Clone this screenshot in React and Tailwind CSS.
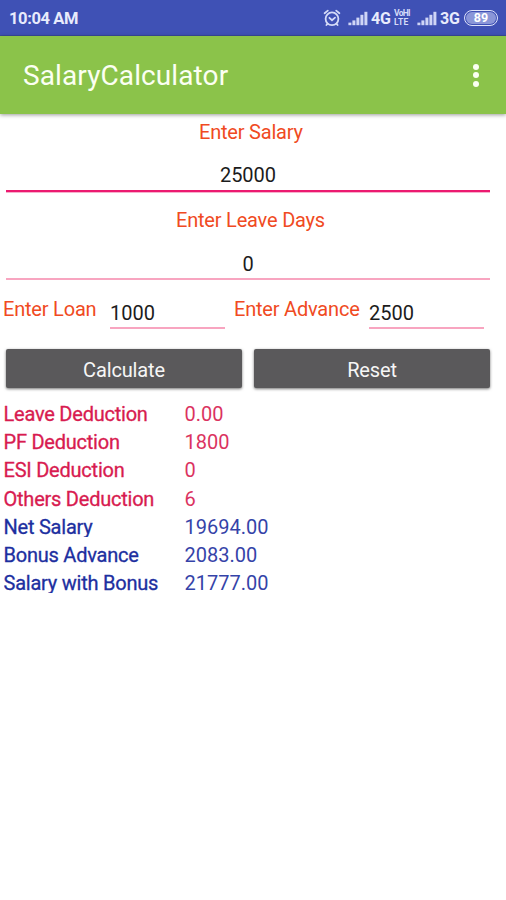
const RED = "text-[#d81b50]";
const BLUE = "text-[#1d2f9f]";

const results = [
  ["Leave Deduction", "0.00", RED],
  ["PF Deduction", "1800", RED],
  ["ESI Deduction", "0", RED],
  ["Others Deduction", "6", RED],
  ["Net Salary", "19694.00", BLUE],
  ["Bonus Advance", "2083.00", BLUE],
  ["Salary with Bonus", "21777.00", BLUE],
];

function AlarmIcon() {
  return (
    <svg className="ml-[323px] mt-[9px] h-[18px] w-[18px] shrink-0" viewBox="0 0 18 18" fill="none" stroke="#d5dbf8" strokeWidth="1.8" strokeLinecap="round">
      <circle cx="9" cy="9.8" r="6.4" />
      <path d="M1.6 4.2 4.8 1.6M16.4 4.2 13.2 1.6M6.4 8.8 9 11.2l3-2.6M4.4 14.8l-1 1.2M13.6 14.8l1 1.2" />
    </svg>
  );
}

function SignalIcon() {
  return (
    <svg className="mt-[11px] h-[15px] w-[20px] shrink-0" viewBox="0 0 20 15" fill="#cfd5f6">
      <rect x="0.4" y="11.6" width="3" height="2.6" />
      <rect x="4.4" y="9.4" width="3" height="4.8" />
      <rect x="8.4" y="6.6" width="3" height="7.6" />
      <rect x="12.4" y="3.8" width="3" height="10.4" />
      <rect x="16.4" y="0.8" width="3" height="13.4" />
    </svg>
  );
}

function StatusBar() {
  return (
    <div className="relative flex h-9 items-start bg-[#3f51b5] text-[#e8ebfc] shadow-[inset_0_-1px_0_#3a4c9c]">
      <div className="absolute left-[9px] top-[7px] text-[16.5px] font-bold leading-6 tracking-[-0.4px]">10:04 AM</div>
      <AlarmIcon />
      <div className="ml-[7px] flex">
        <SignalIcon />
        <span className="ml-[3px] mt-[7px] w-[21px] text-[16px] font-bold leading-6 tracking-[-0.3px]">4G</span>
        <span className="ml-[2px] mt-[9px] flex w-[16px] flex-col text-[8.5px] font-bold leading-[9px] text-[#d5dbf8]">
          <span className="tracking-[-0.7px]">VoHI</span>
          <span className="tracking-[0.3px]">LTE</span>
        </span>
      </div>
      <div className="ml-[7px] flex">
        <SignalIcon />
        <span className="ml-[3px] mt-[7px] w-[21px] text-[16px] font-bold leading-6 tracking-[-0.3px]">3G</span>
      </div>
      <div className="ml-[3px] mt-[10px] flex h-4 w-[34px] shrink-0 items-center justify-center rounded-full border-[1.5px] border-[#dfe3fa] p-[1px]">
        <span className="flex h-full w-full items-center justify-center rounded-full bg-[#8a96d8] text-[12.5px] font-bold leading-none text-white">89</span>
      </div>
    </div>
  );
}

function AppBar() {
  return (
    <header className="relative flex h-[78px] items-center justify-between bg-[#8bc34a] pl-[23px] pr-[27px] shadow-[0_1px_4px_rgba(0,0,0,0.4)]">
      <h1 className="pt-[1px] text-[28px] leading-8 tracking-[0.1px] text-[#fbfff2]">SalaryCalculator</h1>
      <div className="flex flex-col gap-[2.5px]">
        <i className="h-[6px] w-[6px] rounded-full bg-[#fbfff2]" />
        <i className="h-[6px] w-[6px] rounded-full bg-[#fbfff2]" />
        <i className="h-[6px] w-[6px] rounded-full bg-[#fbfff2]" />
      </div>
    </header>
  );
}

function Button({ children }) {
  return (
    <button className="flex h-[39px] w-[236px] items-center justify-center rounded-[2px] bg-[#5a595b] pt-[2px] text-[20px] leading-6 tracking-[-0.15px] text-[#f6f6f6] shadow-[0_1px_3px_rgba(0,0,0,0.55)]">
      {children}
    </button>
  );
}

export default function App() {
  return (
    <div className="h-[900px] w-[506px] overflow-hidden bg-white font-['Roboto',sans-serif] text-[20px] leading-6 text-[#1c1c1c]">
      <StatusBar />
      <AppBar />
      <main>
        <section className="pt-[6px]">
          <div className="pl-[199px] tracking-[-0.2px] text-[#f04a22]">Enter Salary</div>
          <div className="ml-[6px] mt-[19px] w-[484px]">
            <div className="h-[27px] text-center">25000</div>
            <div className="h-[2px] bg-[#ec1a70]" />
            <div className="h-px bg-[#f7b0cc]" />
          </div>
        </section>
        <section className="mt-[15px]">
          <div className="pl-[176px] tracking-[-0.2px] text-[#f04a22]">Enter Leave Days</div>
          <div className="ml-[6px] mt-[20px] w-[484px]">
            <div className="h-[26px] text-center">0</div>
            <div className="h-[2px] bg-[#f8a5c0]" />
          </div>
        </section>
        <section className="mt-[17px] flex h-[52px] pl-[3px]">
          <div className="w-[107px] tracking-[-0.2px] text-[#f04a22]">Enter Loan</div>
          <div className="mt-[4px] w-[115px]">
            <div className="h-[26px]">1000</div>
            <div className="h-[2px] bg-[#f8a5c0]" />
          </div>
          <div className="ml-[9px] w-[135px] tracking-[-0.2px] text-[#f04a22]">Enter Advance</div>
          <div className="mt-[4px] w-[115px]">
            <div className="h-[26px]">2500</div>
            <div className="h-[2px] bg-[#f8a5c0]" />
          </div>
        </section>
        <section className="flex gap-[12px] pl-[6px]">
          <Button>Calculate</Button>
          <Button>Reset</Button>
        </section>
        <section className="mt-[12px]">
          {results.map(([label, value, color]) => (
            <div key={label} className={`flex h-[28.2px] pl-[3.5px] pt-[2px] ${color}`}>
              <span className="h-[22px] w-[181px] overflow-hidden tracking-[-0.23px] [-webkit-text-stroke:0.3px_currentColor]">{label}</span>
              <span className="opacity-90">{value}</span>
            </div>
          ))}
        </section>
      </main>
    </div>
  );
}
